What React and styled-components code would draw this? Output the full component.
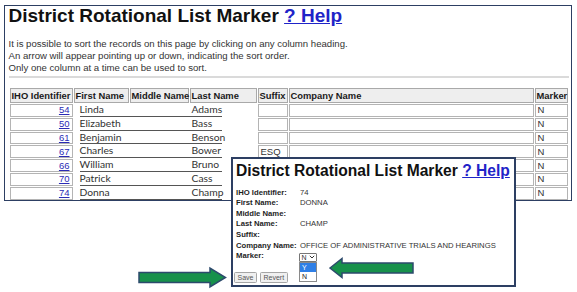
import React from 'react';
import styled, { createGlobalStyle } from 'styled-components';

const GlobalStyle = createGlobalStyle`
  html, body {
    margin: 0;
    padding: 0;
    background: #fff;
  }
  body {
    width: 577px;
    height: 292px;
    overflow: hidden;
    font-family: "Liberation Sans", Arial, sans-serif;
    color: #222;
  }
`

const rows = [
  { id: 54, first: 'Linda', last: 'Adams', suffix: '' },
  { id: 50, first: 'Elizabeth', last: 'Bass', suffix: '' },
  { id: 61, first: 'Benjamin', last: 'Benson', suffix: '' },
  { id: 67, first: 'Charles', last: 'Bower', suffix: 'ESQ' },
  { id: 66, first: 'William', last: 'Bruno', suffix: '' },
  { id: 70, first: 'Patrick', last: 'Cass', suffix: '' },
  { id: 74, first: 'Donna', last: 'Champ', suffix: '' },
];

const fields = [
  ['IHO Identifier:', '74'],
  ['First Name:', 'DONNA'],
  ['Middle Name:', ''],
  ['Last Name:', 'CHAMP'],
  ['Suffix:', ''],
  ['Company Name:', 'OFFICE OF ADMINISTRATIVE TRIALS AND HEARINGS'],
];

// page + main panel
const Page = styled.div`
  position: relative;
  width: 577px;
  height: 292px;
  padding: 5px 5px 0 4px;
  box-sizing: border-box;
`
const Panel = styled.div`
  height: 196px;
  border: 1.5px solid #2d3f63;
  padding: 0 2px 0 3.5px;
  box-sizing: border-box;
`
const Title = styled.h1`
  margin: ${({ small }) => (small ? '0' : '-1px 0 0')};
  font-size: ${({ small }) => (small ? '15.6px' : '19px')};
  line-height: ${({ small }) => (small ? '18px' : '22px')};
  font-weight: bold;
  color: #111;
  white-space: nowrap;
`
const HelpLink = styled.a`
  color: #1f24c8;
  text-decoration: underline;
`
const Intro = styled.p`
  margin: 11px 0 0;
  font-size: 9.6px;
  line-height: 12px;
  color: #333;
`
const Rule = styled.div`
  height: 2px;
  margin-top: 2px;
  background: #dadada;
`

// records table
const Table = styled.table`
  margin-top: 9px;
  table-layout: fixed;
  width: 560px;
  border-collapse: separate;
  border-spacing: 1px;
  font-size: 10px;
`
const HeadCell = styled.th`
  height: 13px;
  padding: 0 0 0 1px;
  text-align: left;
  font-size: 9.4px;
  font-weight: bold;
  white-space: nowrap;
  overflow: visible;
  background: #eeeeee;
  border: 1px solid #a9a9a9;
  color: #1a1a1a;
  line-height: 11px;
`
const Cell = styled.td`
  height: 10.5px;
  padding: 0 2px;
  text-align: ${({ right }) => (right ? 'right' : 'left')};
  border: 1px solid #b4b4b4;
  border-width: 1.5px 1px 1px 1.5px;
  background: #fff;
  font-size: 9.5px;
  line-height: 10px;
  color: #333;
  white-space: nowrap;
  overflow: hidden;
`
const NameCell = styled.td`
  padding: 0;
  background: #fff;
`
const NameLine = styled.div`
  display: flex;
  margin-left: 6px;
  width: 142px;
  border-bottom: 1px solid #555;
  font-family: Lato, "Open Sans", sans-serif;
  font-size: 10.3px;
  line-height: 11.8px;
  color: #333;
  white-space: nowrap;
`
const FirstName = styled.span`
  flex: none;
  width: 112px;
`
const IdLink = styled.a`
  color: #2b2bb5;
  text-decoration: underline;
`

// edit dialog laid over the table
const Dialog = styled.div`
  position: absolute;
  left: 231px;
  top: 157px;
  width: 285px;
  height: 130px;
  box-sizing: border-box;
  border: 2px solid #2d3f63;
  background: #fff;
  padding: 3px 3px 0;
`
const Fields = styled.div`
  display: grid;
  grid-template-columns: 64px 1fr;
  grid-auto-rows: 10.6px;
  margin-top: 7.7px;
  font-size: 7.7px;
  line-height: 10.6px;
`
const Label = styled.div`
  font-weight: bold;
  color: #1e1e1e;
  white-space: nowrap;
`
const Value = styled.div`
  position: relative;
  color: #333;
  white-space: nowrap;
`
const SelectBox = styled.div`
  display: flex;
  align-items: center;
  justify-content: space-between;
  margin: 1.5px 0 0 -1px;
  width: 18px;
  height: 9px;
  box-sizing: border-box;
  padding: 0 1.5px;
  border: 1px solid #767676;
  border-radius: 1px;
  font-size: 7px;
  line-height: 7px;
  background: #fff;
`
const OptionList = styled.div`
  position: absolute;
  left: -1px;
  top: 10.5px;
  width: 18px;
  box-sizing: border-box;
  border: 1px solid #8a8a8a;
  background: #fff;
  z-index: 2;
`
const Option = styled.div`
  height: 9px;
  padding-left: 2px;
  font-size: 7px;
  line-height: 9px;
  background: ${({ active }) => (active ? '#2f7fe6' : '#fff')};
  color: ${({ active }) => (active ? '#fff' : '#222')};
`
const Buttons = styled.div`
  display: flex;
  gap: 3px;
  margin: 10px 0 0 -2px;
`
const Button = styled.button`
  height: 11px;
  padding: 0 2.5px;
  font-family: "Liberation Sans", Arial, sans-serif;
  font-size: 7px;
  line-height: 9px;
  color: #555;
  background: #f0f0f0;
  border: 1px solid #a5a5a5;
  border-radius: 1.5px;
`

const Arrow = styled.svg`
  position: absolute;
  left: ${({ x }) => x}px;
  top: ${({ y }) => y}px;
  overflow: visible;
`

const Chevron = () => (
  <svg width="6" height="4" viewBox="0 0 6 4">
    <path d="M0.8 0.8 L3 3 L5.2 0.8" fill="none" stroke="#333" strokeWidth="1" />
  </svg>
);

const App = () => {
  return (
    <Page>
      <GlobalStyle />
      <Panel>
        <Title>
          District Rotational List Marker <HelpLink href="#">? Help</HelpLink>
        </Title>
        <Intro>
          It is possible to sort the records on this page by clicking on any column heading.
          <br />
          An arrow will appear pointing up or down, indicating the sort order.
          <br />
          Only one column at a time can be used to sort.
        </Intro>
        <Rule />
        <Table>
          <colgroup>
            <col style={{ width: 63 }} />
            <col style={{ width: 55 }} />
            <col style={{ width: 59 }} />
            <col style={{ width: 67 }} />
            <col style={{ width: 30 }} />
            <col style={{ width: 245 }} />
            <col style={{ width: 33 }} />
          </colgroup>
          <thead>
            <tr>
              <HeadCell>IHO Identifier</HeadCell>
              <HeadCell>First Name</HeadCell>
              <HeadCell>Middle Name</HeadCell>
              <HeadCell>Last Name</HeadCell>
              <HeadCell>Suffix</HeadCell>
              <HeadCell>Company Name</HeadCell>
              <HeadCell>Marker</HeadCell>
            </tr>
          </thead>
          <tbody>
            {rows.map((r) => (
              <tr key={r.id}>
                <Cell right>
                  <IdLink href="#">{r.id}</IdLink>
                </Cell>
                <NameCell colSpan={3}>
                  <NameLine>
                    <FirstName>{r.first}</FirstName>
                    <span>{r.last}</span>
                  </NameLine>
                </NameCell>
                <Cell>{r.suffix}</Cell>
                <Cell />
                <Cell>N</Cell>
              </tr>
            ))}
          </tbody>
        </Table>
      </Panel>

      <Dialog>
        <Title small>
          District Rotational List Marker <HelpLink href="#">? Help</HelpLink>
        </Title>
        <Fields>
          {fields.map(([label, value]) => (
            <React.Fragment key={label}>
              <Label>{label}</Label>
              <Value>{value}</Value>
            </React.Fragment>
          ))}
          <Label>Marker:</Label>
          <Value>
            <SelectBox>
              <span>N</span>
              <Chevron />
            </SelectBox>
            <OptionList>
              <Option active>Y</Option>
              <Option>N</Option>
            </OptionList>
          </Value>
        </Fields>
        <Buttons>
          <Button>Save</Button>
          <Button>Revert</Button>
        </Buttons>
      </Dialog>

      <Arrow x={138} y={267} width="89" height="21" viewBox="0 0 89 21">
        <path d="M1 5.5 H72 V1 L87.5 10.5 L72 20 V15.5 H1 Z" fill="#17914b" stroke="#2c4a6c" strokeWidth="1.5" strokeLinejoin="miter" />
      </Arrow>
      <Arrow x={329} y={257} width="86" height="22" viewBox="0 0 86 22">
        <path d="M1 11 L13 1.5 V6 H84 V16 H13 V20.5 Z" fill="#17914b" stroke="#2c4a6c" strokeWidth="1.5" strokeLinejoin="miter" />
      </Arrow>
    </Page>
  );
};

export default App;
